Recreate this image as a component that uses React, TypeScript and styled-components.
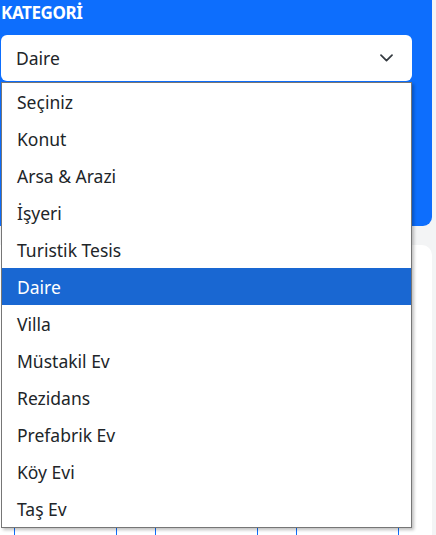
import React from "react";
import styled, { createGlobalStyle } from "styled-components";

const GlobalStyle = createGlobalStyle`
  html, body {
    margin: 0;
    padding: 0;
    background: #f3f4f5;
    font-family: "Noto Sans", "Open Sans", sans-serif;
    overflow: hidden;
  }
`;

const Page = styled.div`
  width: 432px;
  display: flex;
  flex-direction: column;
  gap: 19px;
`;

const Panel = styled.div`
  background: #0d6efd;
  height: 226px;
  border-radius: 0 0 9px 0;
  padding: 1px 20px 0 1px;
  box-sizing: border-box;
`;

const Label = styled.div`
  color: #fff;
  font-weight: 700;
  font-size: 17px;
  line-height: 24px;
  margin-bottom: 10px;
  letter-spacing: -0.4px;
`;

const SelectWrap = styled.div`
  position: relative;
`;

const SelectBox = styled.div`
  height: 46px;
  background: #fff;
  border-radius: 6px;
  display: flex;
  align-items: center;
  justify-content: space-between;
  padding: 0 19px 0 15px;
  font-size: 17.5px;
  color: #212529;
`;

const List = styled.ul`
  position: absolute;
  left: 0;
  top: 47px;
  width: 411px;
  margin: 0;
  padding: 0;
  list-style: none;
  background: #fff;
  border: 1px solid #767676;
  box-sizing: border-box;
  box-shadow: 2px 2px 3px rgba(0, 0, 0, 0.25);
  z-index: 5;
`;

const Option = styled.li<{ selected?: boolean }>`
  height: 37px;
  display: flex;
  align-items: center;
  padding-left: 15px;
  font-size: 17.5px;
  color: ${(p) => (p.selected ? "#fff" : "#212529")};
  background: ${(p) => (p.selected ? "#1967d2" : "transparent")};
`;

const Card = styled.div`
  background: #fff;
  border-radius: 0 10px 0 0;
  height: 290px;
  padding: 283px 0 0 14px;
  box-sizing: border-box;
  display: flex;
  gap: 38px;
`;

const Cell = styled.div`
  width: 103px;
  height: 7px;
  border-left: 1px solid #0d6efd;
  border-right: 1px solid #0d6efd;
  box-sizing: border-box;
`;

const options = [
  "Seçiniz",
  "Konut",
  "Arsa & Arazi",
  "İşyeri",
  "Turistik Tesis",
  "Daire",
  "Villa",
  "Müstakil Ev",
  "Rezidans",
  "Prefabrik Ev",
  "Köy Evi",
  "Taş Ev",
];

const Chevron = () => (
  <svg width="13" height="8" viewBox="0 0 13 8" fill="none">
    <path d="M1 1.2l5.5 5.5 5.5-5.5" stroke="#343a40" strokeWidth="1.7" strokeLinecap="round" strokeLinejoin="round" />
  </svg>
);

const App: React.FC = () => {
  return (
    <React.Fragment>
      <GlobalStyle />
      <Page>
        <Panel>
          <Label>KATEGORİ</Label>
          <SelectWrap>
            <SelectBox>
              <span>Daire</span>
              <Chevron />
            </SelectBox>
            <List>
              {options.map((o) => (
                <Option key={o} selected={o === "Daire"}>
                  {o}
                </Option>
              ))}
            </List>
          </SelectWrap>
        </Panel>
        <Card>
          <Cell />
          <Cell />
          <Cell />
        </Card>
      </Page>
    </React.Fragment>
  );
};

export default App;
